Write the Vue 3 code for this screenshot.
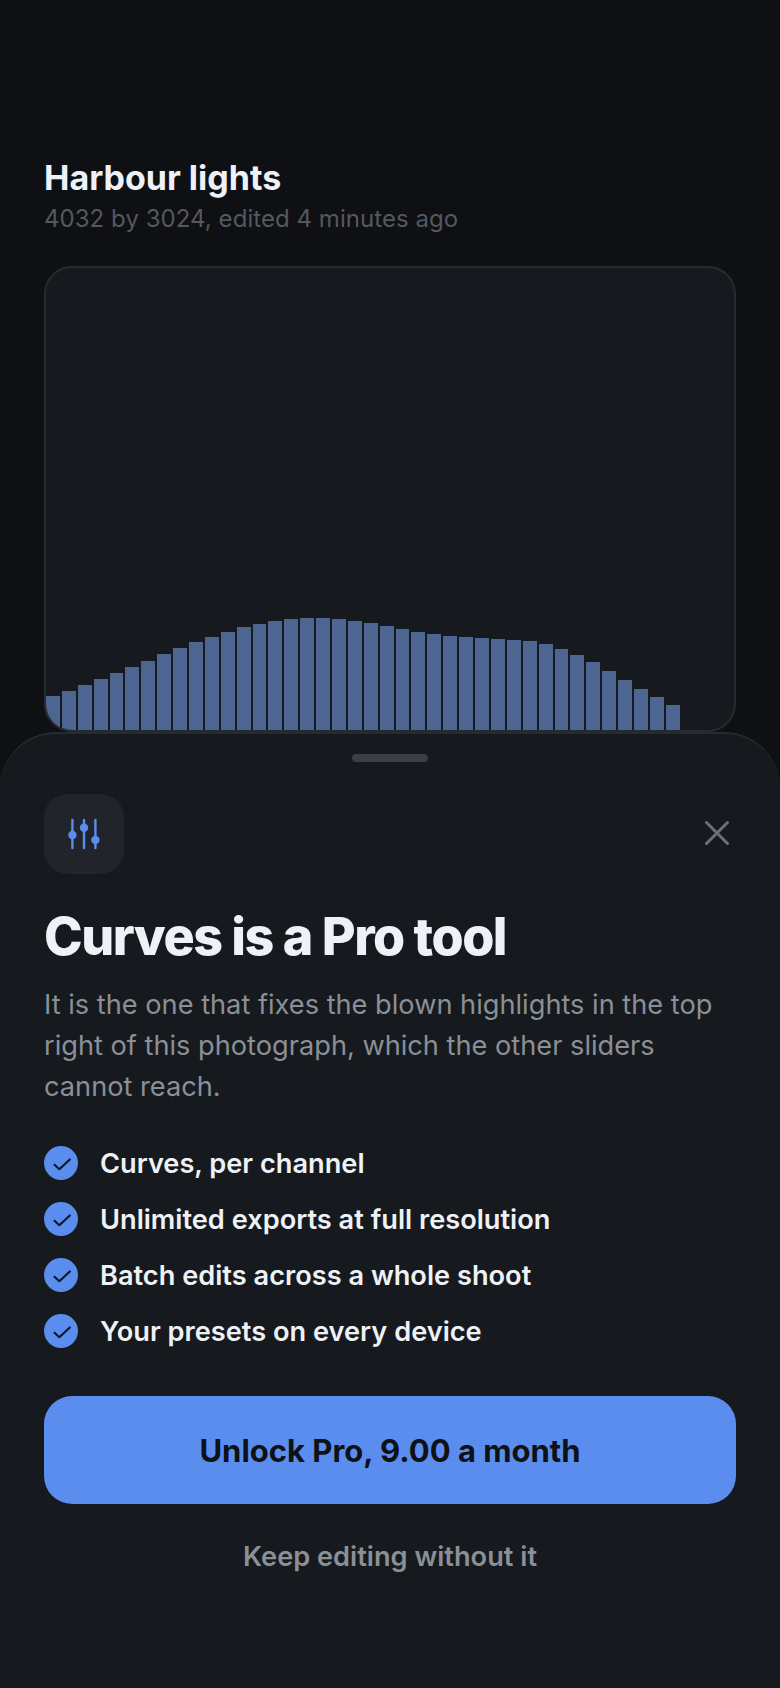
<template>
  <div class="page">
    <header class="head">
      <h1 class="photo-title">Harbour lights</h1>
      <p class="photo-meta">4032 by 3024, edited 4 minutes ago</p>
    </header>

    <div class="preview">
      <div class="histogram">
        <span
          v-for="(h, i) in bars"
          :key="i"
          class="bar"
          :style="{ height: h + 'px' }"
        ></span>
      </div>
    </div>

    <section class="sheet">
      <div class="handle"></div>

      <div class="sheet-top">
        <div class="tool-icon">
          <svg width="36" height="36" viewBox="0 0 36 36" fill="none">
            <g stroke="#5b8def" stroke-width="2.4" stroke-linecap="round">
              <path d="M6.4 4v28" />
              <path d="M18 4v28" />
              <path d="M29.4 4v28" />
            </g>
            <g fill="#5b8def">
              <circle cx="6.4" cy="19" r="4.2" />
              <circle cx="18" cy="11.7" r="4.2" />
              <circle cx="29.4" cy="24" r="4.2" />
            </g>
          </svg>
        </div>
        <button class="close" type="button" aria-label="Close">
          <svg width="28" height="28" viewBox="0 0 28 28" fill="none">
            <path
              d="M3.5 3.5l21 21M24.5 3.5l-21 21"
              stroke="#6d7177"
              stroke-width="3"
              stroke-linecap="round"
            />
          </svg>
        </button>
      </div>

      <h2 class="sheet-title">Curves is a Pro tool</h2>
      <p class="sheet-text">
        It is the one that fixes the blown highlights in the top right of this
        photograph, which the other sliders cannot reach.
      </p>

      <ul class="features">
        <li v-for="item in features" :key="item" class="feature">
          <span class="tick">
            <svg width="34" height="34" viewBox="0 0 34 34" fill="none">
              <path
                d="M10.5 18.8l4.8 4.4L25.8 13.4"
                stroke="#12151a"
                stroke-width="2.1"
                stroke-linecap="round"
                stroke-linejoin="round"
              />
            </svg>
          </span>
          <span class="feature-label">{{ item }}</span>
        </li>
      </ul>

      <button class="unlock" type="button">Unlock Pro, 9.00 a month</button>
      <button class="skip" type="button">Keep editing without it</button>
    </section>
  </div>
</template>

<script setup>
const bars = [
  34, 39, 45, 51, 57, 63, 69, 76, 82, 88, 93, 98, 103, 106, 109, 111, 112, 112,
  111, 109, 107, 104, 101, 98, 96, 94, 93, 92, 91, 90, 89, 86, 81, 75, 68, 59,
  50, 41, 33, 25,
];

const features = [
  "Curves, per channel",
  "Unlimited exports at full resolution",
  "Batch edits across a whole shoot",
  "Your presets on every device",
];
</script>

<style>
html,
body {
  background: #0e1014;
}
</style>

<style scoped>
.page {
  width: 780px;
  height: 1688px;
  display: flex;
  flex-direction: column;
  background: #0e1014;
  font-family: Inter, "Liberation Sans", sans-serif;
  overflow: hidden;
}

.head {
  padding: 157px 44px 0;
}

.photo-title {
  margin: 0;
  font-size: 34px;
  line-height: 42px;
  font-weight: 700;
  color: #eef1f6;
}

.photo-meta {
  margin: 2px 0 0;
  font-size: 24px;
  letter-spacing: 0.05px;
  line-height: 36px;
  color: #55585e;
}

.preview {
  margin: 29px 44px 0;
  flex: 1;
  min-height: 0;
  display: flex;
  align-items: flex-end;
  background: #161a1e;
  border: 2px solid #272b30;
  border-radius: 28px;
  overflow: hidden;
}

.histogram {
  width: 100%;
  display: flex;
  align-items: flex-end;
  gap: 2px;
}

.bar {
  flex: none;
  width: calc(2.31% - 2px);
  background: #4d6591;
}

.sheet {
  flex: none;
  height: 956px;
  box-sizing: border-box;
  padding: 20px 44px 0;
  display: flex;
  flex-direction: column;
  background: #161a1e;
  border-top: 2px solid #272b30;
  border-radius: 56px 56px 0 0;
}

.handle {
  align-self: center;
  width: 76px;
  height: 8px;
  border-radius: 4px;
  background: #3a3f45;
}

.sheet-top {
  margin-top: 32px;
  display: flex;
  align-items: center;
  justify-content: space-between;
}

.tool-icon {
  width: 80px;
  height: 80px;
  display: flex;
  align-items: center;
  justify-content: center;
  background: #21252b;
  border-radius: 24px;
}

.close {
  display: flex;
  padding: 0;
  margin: 0 5px 2px 0;
  border: none;
  background: none;
}

.sheet-title {
  margin: 31px 0 0;
  font-size: 52px;
  line-height: 64px;
  font-weight: 800;
  letter-spacing: -1.5px;
  color: #eef1f6;
}

.sheet-text {
  margin: 15px 0 0;
  font-size: 27.2px;
  line-height: 41px;
  color: #8b8f96;
}

.features {
  list-style: none;
  margin: 39px 0 0;
  padding: 0;
  display: flex;
  flex-direction: column;
  gap: 22px;
}

.feature {
  display: flex;
  align-items: center;
  gap: 22px;
  height: 34px;
  font-size: 27.2px;
  font-weight: 600;
  color: #eef1f6;
}

.feature-label {
  padding-top: 1px;
}

.tick {
  flex: none;
  width: 34px;
  height: 34px;
  display: flex;
  border-radius: 50%;
  background: #5b8def;
}

.unlock {
  margin-top: 48px;
  height: 108px;
  flex: none;
  border: none;
  border-radius: 28px;
  background: #5b8def;
  color: #0e1116;
  font-family: inherit;
  font-size: 31px;
  font-weight: 700;
}

.skip {
  margin-top: 36px;
  padding: 0;
  border: none;
  background: none;
  color: #8b8f96;
  font-family: inherit;
  font-size: 27.2px;
  line-height: 34px;
  font-weight: 600;
}
</style>
